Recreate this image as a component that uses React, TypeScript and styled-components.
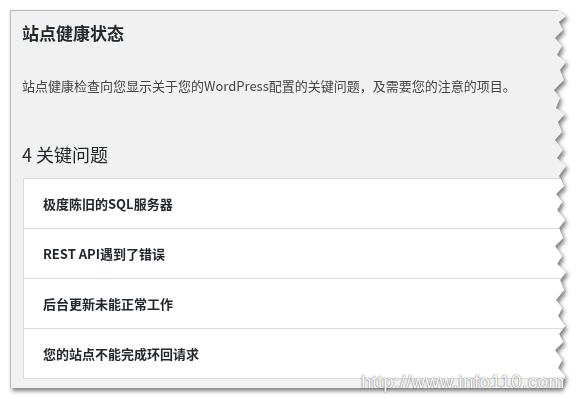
import * as React from 'react';
import styled, { createGlobalStyle } from 'styled-components';

const GlobalStyle = createGlobalStyle`
    html, body {
        margin: 0;
        padding: 0;
        background: #ffffff;
    }
    body {
        font-family: "Noto Sans CJK SC", "Noto Sans", sans-serif;
        color: #23282d;
    }
`;

// torn right edge of the screenshot clipping, relative to the panel box
const tornEdge: [number, number][] = [
    [548, 0], [556, 6], [549, 12], [553, 20], [545, 28], [552, 36], [547, 45],
    [556, 52], [550, 60], [554, 70], [544, 80], [550, 88], [546, 98], [555, 104],
    [548, 112], [552, 122], [545, 130], [553, 140], [547, 148], [556, 156],
    [549, 166], [554, 176], [546, 184], [552, 192], [547, 200], [555, 210],
    [549, 218], [553, 228], [545, 236], [552, 246], [547, 254], [556, 262],
    [550, 270], [554, 280], [546, 290], [552, 298], [548, 306], [555, 316],
    [549, 324], [553, 332], [545, 340], [552, 350], [548, 358], [555, 366],
    [551, 378],
];

const clipPolygon = `polygon(0px 0px, ${tornEdge
    .map(([x, y]) => `${x}px ${y}px`)
    .join(', ')}, 0px 378px)`;

const Page = styled.div`
    position: relative;
    width: 585px;
    height: 399px;
    padding: 10px 0 0 10px;
    box-sizing: border-box;
    overflow: hidden;
`;

const Shadow = styled.div`
    width: 560px;
    filter: drop-shadow(2px 3px 2px rgba(0, 0, 0, 0.5));
`;

const Panel = styled.div`
    width: 560px;
    height: 378px;
    box-sizing: border-box;
    background: #f1f1f1;
    border-top: 1px solid #b9b9b9;
    border-left: 1px solid #b9b9b9;
    padding: 10px 0 0 11px;
    clip-path: ${clipPolygon};
    display: flex;
    flex-direction: column;
`;

const Title = styled.h1`
    margin: 0;
    font-size: 17px;
    line-height: 24px;
    font-weight: 700;
    color: #23282d;
`;

const Description = styled.p`
    margin: 31px 0 0;
    font-size: 13px;
    line-height: 20px;
    color: #444;
`;

const IssuesHeading = styled.h2`
    margin: 45px 0 0;
    font-size: 18px;
    line-height: 26px;
    font-weight: 400;
    color: #23282d;
`;

const IssueList = styled.ul`
    list-style: none;
    margin: 11px 0 0 1px;
    padding: 0;
    background: #ffffff;
    border: 1px solid #dcdcdc;
    border-right: none;
`;

const IssueRow = styled.li`
    height: 49px;
    display: flex;
    align-items: center;
    padding-left: 19px;
    font-size: 13px;
    font-weight: 700;
    color: #23282d;
    & + & {
        border-top: 1px solid #dcdcdc;
    }
`;

const Watermark = styled.div`
    position: absolute;
    left: 361px;
    top: 371px;
    font-family: "Liberation Sans", Arial, sans-serif;
    font-size: 19px;
    letter-spacing: 0.4px;
    color: #ffffff;
    text-shadow: 0 0 1px rgba(0, 0, 0, 0.55), 0 0 2px rgba(0, 0, 0, 0.35);
    white-space: nowrap;
`;

const issues = [
    '极度陈旧的SQL服务器',
    'REST API遇到了错误',
    '后台更新未能正常工作',
    '您的站点不能完成环回请求',
];

export default function App() {
    return (
        <Page>
            <GlobalStyle />
            <Shadow>
                <Panel>
                    <Title>站点健康状态</Title>
                    <Description>
                        站点健康检查向您显示关于您的WordPress配置的关键问题，及需要您的注意的项目。
                    </Description>
                    <IssuesHeading>4 关键问题</IssuesHeading>
                    <IssueList>
                        {issues.map((label) => (
                            <IssueRow key={label}>{label}</IssueRow>
                        ))}
                    </IssueList>
                </Panel>
            </Shadow>
            <Watermark>http://www.info110.com</Watermark>
        </Page>
    );
}
